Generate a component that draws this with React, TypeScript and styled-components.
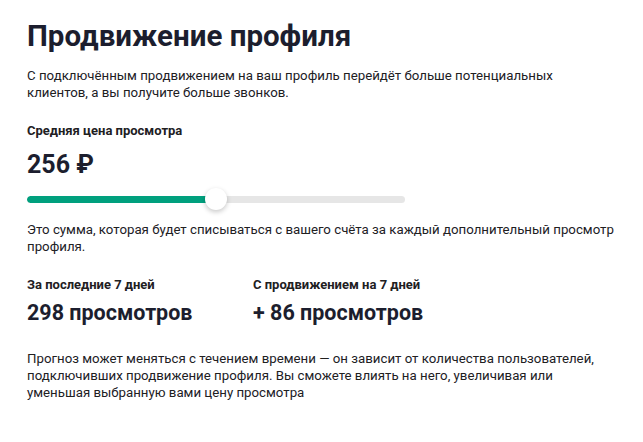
import styled, { createGlobalStyle } from "styled-components";

const GlobalStyle = createGlobalStyle`
  body {
    margin: 0;
    background: #ffffff;
    font-family: Roboto, "Noto Sans", Arial, sans-serif;
    color: #21201f;
  }
`;

const Page = styled.div`
  padding: 18px 27px 20px 27px;
  width: 600px;
`;

const Title = styled.h1`
  margin: 0;
  font-size: 29.5px;
  line-height: 36px;
  font-weight: 700;
  color: #1c1e2e;
`;

const Text = styled.p<{ $mt?: number }>`
  margin: ${(p) => p.$mt ?? 0}px 0 0 0;
  font-size: 13.25px;
  line-height: 17px;
  color: #21201f;
`;

const Label = styled.div<{ $mt?: number }>`
  margin-top: ${(p) => p.$mt ?? 0}px;
  font-size: 13px;
  line-height: 18px;
  font-weight: 700;
  color: #21201f;
`;

const Price = styled.div`
  margin-top: 10px;
  font-size: 25px;
  line-height: 30px;
  font-weight: 700;
  color: #1c1e2e;
`;

const Slider = styled.div`
  position: relative;
  margin-top: 8px;
  width: 378px;
  height: 22px;
  display: flex;
  align-items: center;
`;

const Track = styled.div`
  width: 100%;
  height: 7px;
  border-radius: 4px;
  background: #e6e6e6;
  overflow: hidden;
`;

const Fill = styled.div`
  height: 100%;
  background: #00a07e;
  border-radius: 4px;
`;

const Thumb = styled.div`
  position: absolute;
  top: 0;
  width: 22px;
  height: 22px;
  border-radius: 50%;
  background: #ffffff;
  box-shadow: 0 2px 5px rgba(0, 0, 0, 0.22);
  transform: translateX(-50%);
`;

const Stats = styled.div`
  margin-top: 21px;
  display: grid;
  grid-template-columns: 226px 1fr;
`;

const Stat = styled.div`
  display: flex;
  flex-direction: column;
`;

const Value = styled.div`
  margin-top: 6px;
  font-size: 21.5px;
  line-height: 26px;
  font-weight: 700;
  color: #1c1e2e;
`;

export default function App() {
  const pct = 50;
  return (
    <>
      <GlobalStyle />
      <Page>
        <Title>Продвижение профиля</Title>
        <Text $mt={13}>
          С подключённым продвижением на ваш профиль перейдёт больше потенциальных
          <br />
          клиентов, а вы получите больше звонков.
        </Text>
        <Label $mt={21}>Средняя цена просмотра</Label>
        <Price>256 ₽</Price>
        <Slider>
          <Track>
            <Fill style={{ width: `${pct}%` }} />
          </Track>
          <Thumb style={{ left: `${pct}%` }} />
        </Slider>
        <Text $mt={11}>
          Это сумма, которая будет списываться с вашего счёта за каждый дополнительный просмотр
          <br />
          профиля.
        </Text>
        <Stats>
          <Stat>
            <Label>За последние 7 дней</Label>
            <Value>298 просмотров</Value>
          </Stat>
          <Stat>
            <Label>С продвижением на 7 дней</Label>
            <Value>+ 86 просмотров</Value>
          </Stat>
        </Stats>
        <Text $mt={24}>
          Прогноз может меняться с течением времени — он зависит от количества пользователей,
          <br />
          подключивших продвижение профиля. Вы сможете влиять на него, увеличивая или
          <br />
          уменьшая выбранную вами цену просмотра
        </Text>
      </Page>
    </>
  );
}
